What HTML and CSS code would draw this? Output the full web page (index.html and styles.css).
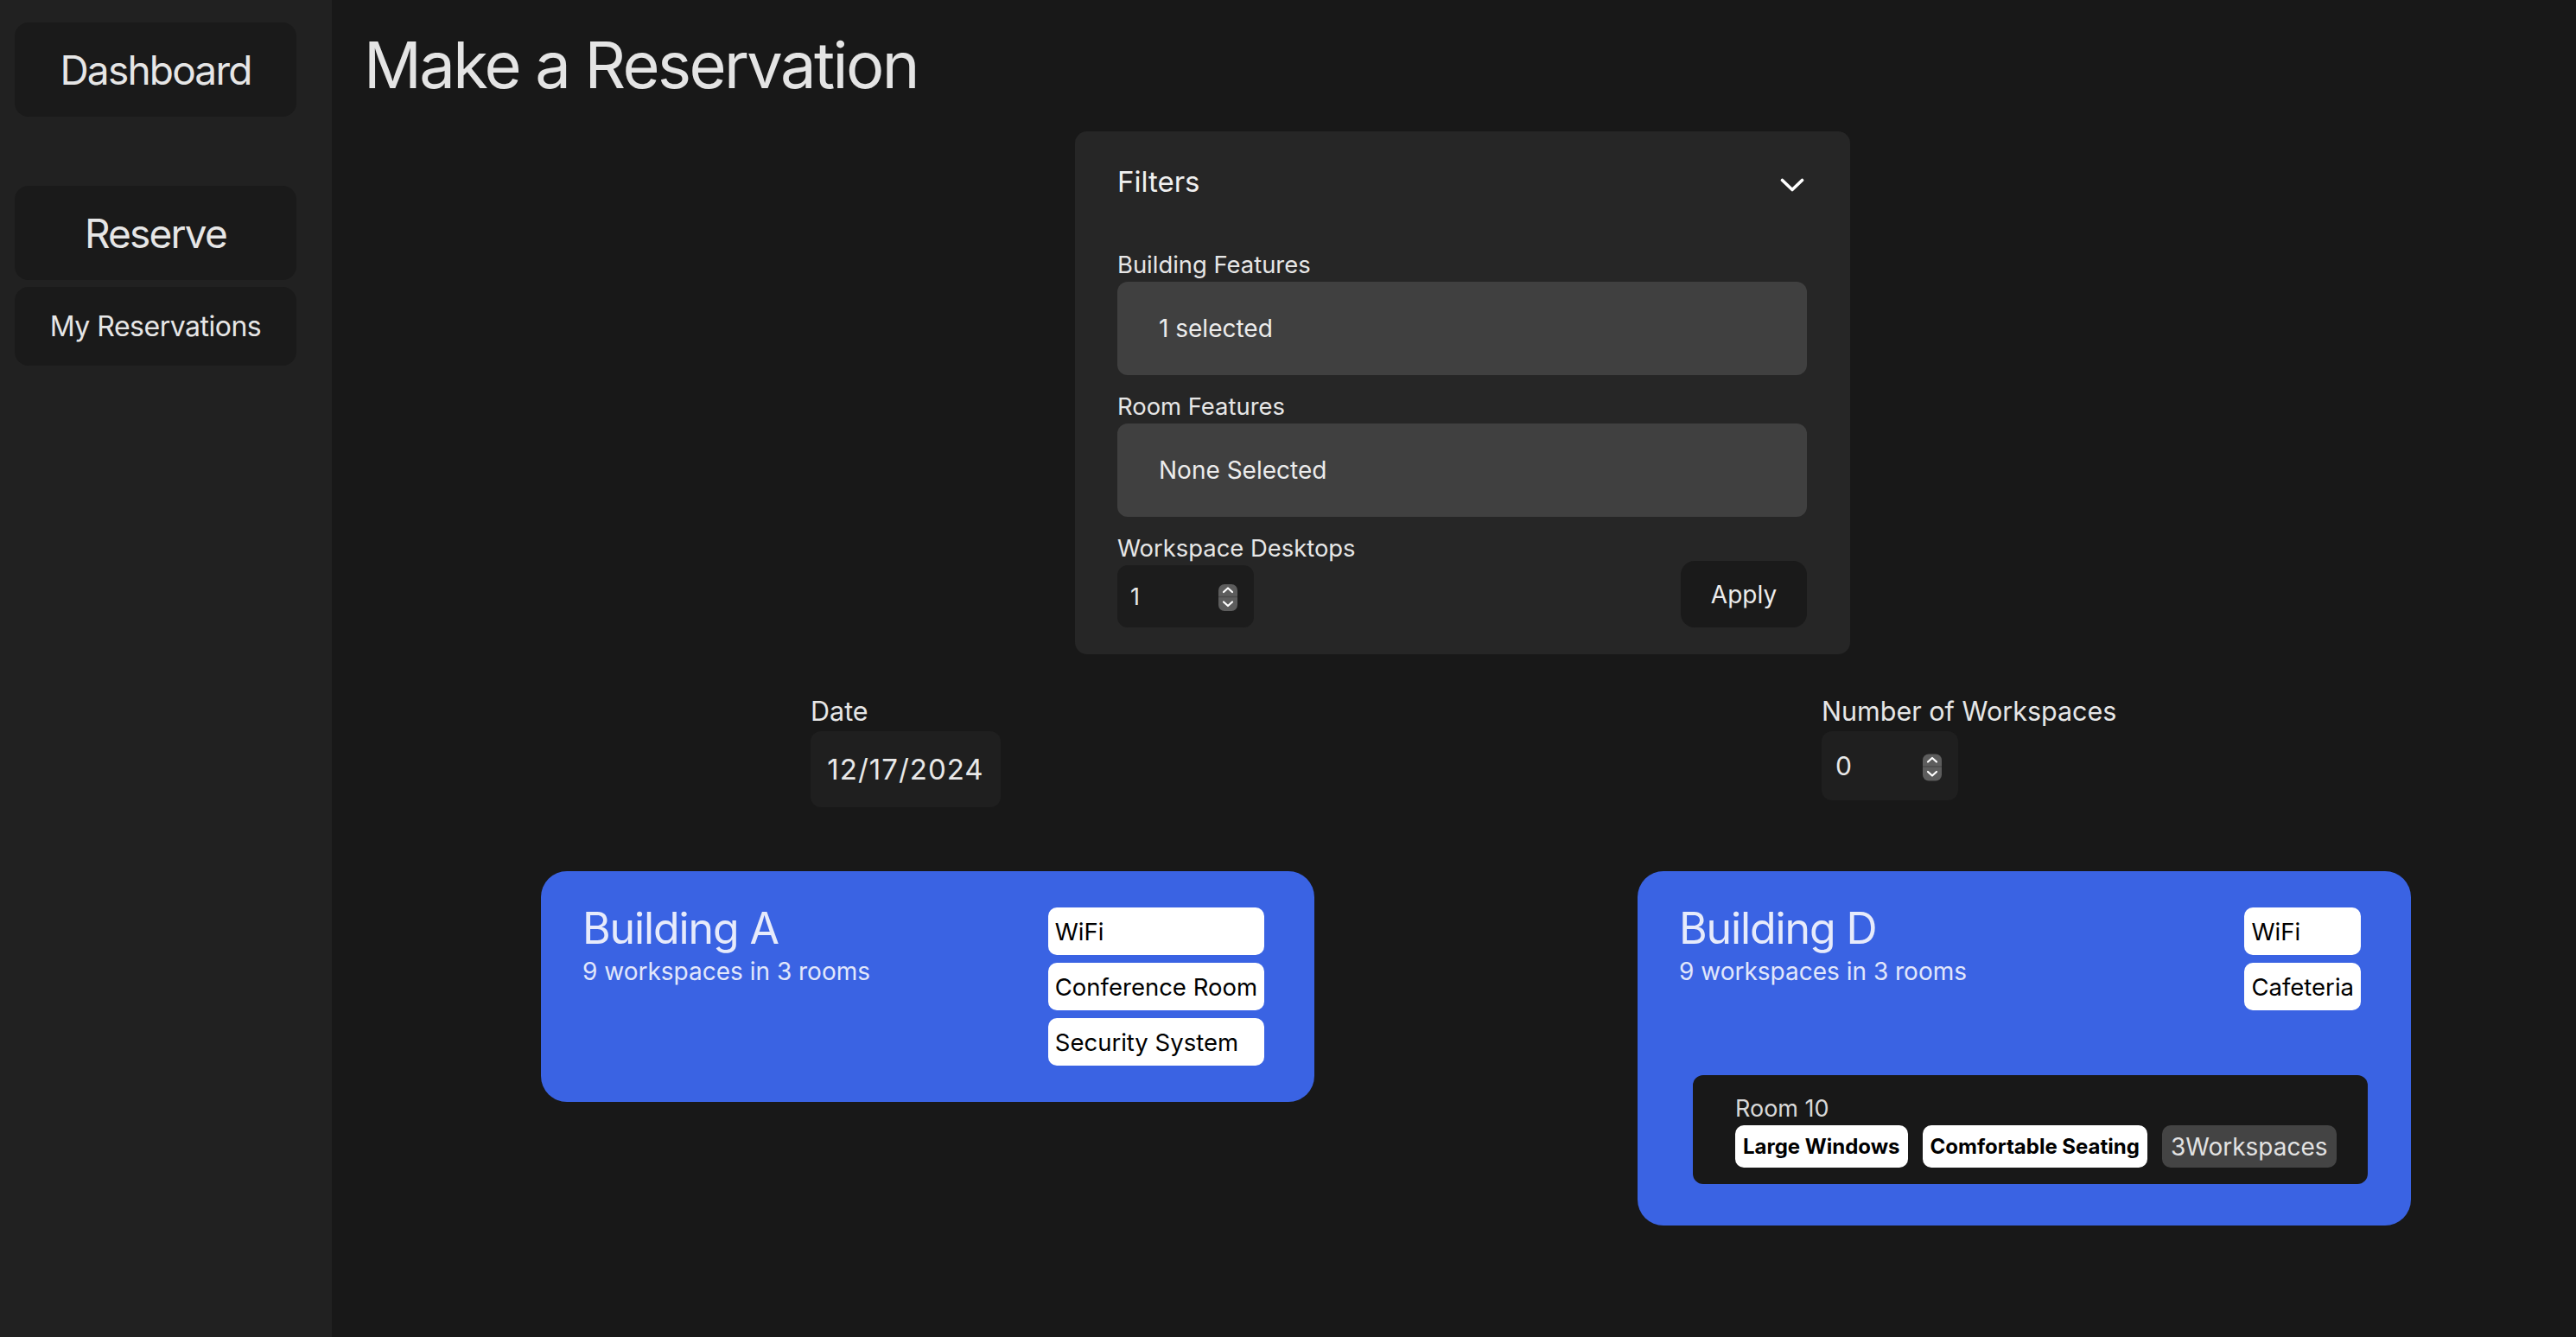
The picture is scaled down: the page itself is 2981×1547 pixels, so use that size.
FILE: index.html
```html
<!DOCTYPE html>
<html lang="en">
<head>
<meta charset="utf-8">
<title>Make a Reservation</title>
<link rel="stylesheet" href="styles.css">
</head>
<body>
<div class="app">
  <aside class="sidebar">
    <a class="nav-btn nav-lg" href="#">Dashboard</a>
    <div class="nav-group">
      <a class="nav-btn nav-lg" href="#">Reserve</a>
      <a class="nav-btn nav-sm" href="#">My Reservations</a>
    </div>
  </aside>
  <main class="main">
    <h1 class="page-title">Make a Reservation</h1>

    <section class="filters">
      <div class="filters-head">
        <span>Filters</span>
        <svg class="chev" width="28" height="16" viewBox="0 0 28 16"><polyline points="2.5,2.5 14,13.5 25.5,2.5" fill="none" stroke="#fff" stroke-width="3.6" stroke-linecap="round" stroke-linejoin="round"/></svg>
      </div>
      <div class="filters-body">
        <div class="field">
          <span class="field-label">Building Features</span>
          <div class="select">1 selected</div>
        </div>
        <div class="field">
          <span class="field-label">Room Features</span>
          <div class="select">None Selected</div>
        </div>
        <div class="field-row">
          <div class="field">
            <span class="field-label">Workspace Desktops</span>
            <div class="num-input"><span>1</span>
              <svg class="spin" width="22" height="31" viewBox="0 0 22 31"><rect x="0" y="0" width="22" height="31" rx="7" fill="#5d5d5d"/><line x1="0" y1="14.5" x2="22" y2="14.5" stroke="#4b4b4b" stroke-width="1.5"/><polyline points="6,9 11,4.5 16,9" fill="none" stroke="#fff" stroke-width="2.2" stroke-linecap="round" stroke-linejoin="round"/><polyline points="6,20.5 11,25 16,20.5" fill="none" stroke="#fff" stroke-width="2.2" stroke-linecap="round" stroke-linejoin="round"/></svg>
            </div>
          </div>
          <button class="apply" type="button">Apply</button>
        </div>
      </div>
    </section>

    <div class="controls">
      <div class="ctl">
        <span class="ctl-label">Date</span>
        <div class="date-input">12/17/2024</div>
      </div>
      <div class="ctl">
        <span class="ctl-label">Number of Workspaces</span>
        <div class="count-input"><span>0</span>
          <svg class="spin" width="22" height="32" viewBox="0 0 22 31"><rect x="0" y="0" width="22" height="31" rx="7" fill="#5d5d5d"/><line x1="0" y1="14.5" x2="22" y2="14.5" stroke="#4b4b4b" stroke-width="1.5"/><polyline points="6,9 11,4.5 16,9" fill="none" stroke="#fff" stroke-width="2.2" stroke-linecap="round" stroke-linejoin="round"/><polyline points="6,20.5 11,25 16,20.5" fill="none" stroke="#fff" stroke-width="2.2" stroke-linecap="round" stroke-linejoin="round"/></svg>
        </div>
      </div>
    </div>

    <div class="cards">
      <article class="card">
        <div class="card-head">
          <div class="card-info">
            <h2 class="card-title">Building A</h2>
            <p class="card-sub">9 workspaces in 3 rooms</p>
          </div>
          <div class="tags">
            <span class="tag">WiFi</span>
            <span class="tag">Conference Room</span>
            <span class="tag">Security System</span>
          </div>
        </div>
      </article>

      <article class="card card-rooms">
        <div class="card-head">
          <div class="card-info">
            <h2 class="card-title">Building D</h2>
            <p class="card-sub">9 workspaces in 3 rooms</p>
          </div>
          <div class="tags">
            <span class="tag">WiFi</span>
            <span class="tag">Cafeteria</span>
          </div>
        </div>
        <div class="room">
          <div class="room-name">Room 10</div>
          <div class="room-tags">
            <span class="rtag">Large Windows</span>
            <span class="rtag">Comfortable Seating</span>
            <span class="rtag rtag-count">3Workspaces</span>
          </div>
        </div>
      </article>
    </div>
  </main>
</div>
</body>
</html>
```

FILE: styles.css
```css
* { box-sizing: border-box; }

html, body {
  margin: 0;
  height: 100%;
}

body {
  background: #181818;
  font-family: Inter, "Noto Sans", sans-serif;
  color: #e4e4e4;
}

.app {
  display: flex;
  min-height: 100vh;
}

/* Sidebar */
.sidebar {
  width: 384px;
  flex-shrink: 0;
  background: #212121;
  padding: 26px 41px 0 17px;
  display: flex;
  flex-direction: column;
}

.nav-btn {
  display: flex;
  align-items: center;
  justify-content: center;
  background: #1a1a1a;
  border-radius: 16px;
  color: #e6e6e6;
  text-decoration: none;
}

.nav-lg {
  height: 109px;
  font-size: 46px;
  letter-spacing: -1.8px;
}

.nav-sm {
  height: 91px;
  font-size: 32px;
  letter-spacing: -0.5px;
}

.nav-group {
  margin-top: 80px;
  display: flex;
  flex-direction: column;
  gap: 8px;
}

/* Main */
.main {
  flex: 1;
  padding-top: 30px;
}

.page-title {
  margin: 0 0 32px 37px;
  font-size: 74px;
  font-weight: 400;
  line-height: 90px;
  letter-spacing: -2.6px;
  color: #e4e4e4;
}

/* Filters panel */
.filters {
  margin-left: 860px;
  width: 897px;
  background: #262626;
  border-radius: 14px;
  padding: 38px 50px 31px 49px;
}

.filters-head {
  display: flex;
  justify-content: space-between;
  align-items: center;
  height: 40px;
  font-size: 33px;
  line-height: 40px;
  color: #f0f0f0;
}

.chev {
  margin-top: 8px;
  margin-right: 3px;
}

.filters-body {
  margin-top: 60px;
}

.field {
  display: flex;
  flex-direction: column;
}

.field + .field {
  margin-top: 20px;
}

.field-label {
  font-size: 27.4px;
  line-height: 33px;
  margin-bottom: 3px;
  color: #e6e6e6;
}

.select {
  height: 108px;
  background: #404040;
  border-radius: 12px;
  padding-left: 48px;
  display: flex;
  align-items: center;
  font-size: 28px;
  color: #ececec;
}

.field-row {
  display: flex;
  justify-content: space-between;
  align-items: flex-end;
  margin-top: 20px;
}

.num-input,
.count-input {
  display: flex;
  align-items: center;
  justify-content: space-between;
  color: #e8e8e8;
  border-radius: 12px;
}

.num-input {
  width: 158px;
  height: 72px;
  background: #1c1c1c;
  padding: 0 19px 0 15px;
  font-size: 27px;
}

.spin {
  display: block;
  margin-top: 3px;
}

.apply {
  width: 146px;
  height: 77px;
  border: 0;
  background: #1a1a1a;
  border-radius: 16px;
  font-family: inherit;
  font-size: 28px;
  color: #ececec;
  display: flex;
  align-items: center;
  justify-content: center;
  padding: 0;
}

/* Date & count */
.controls {
  display: grid;
  grid-template-columns: 1170px auto;
  margin: 48px 0 0 554px;
}

.ctl {
  display: flex;
  flex-direction: column;
  align-items: flex-start;
}

.ctl-label {
  font-size: 30.5px;
  line-height: 35px;
  margin-bottom: 6px;
  color: #e6e6e6;
}

.date-input {
  width: 220px;
  height: 88px;
  background: #1f1f1f;
  border-radius: 12px;
  font-size: 33px;
  letter-spacing: 1px;
  display: flex;
  align-items: center;
  justify-content: center;
  color: #e8e8e8;
}

.count-input {
  width: 158px;
  height: 80px;
  background: #1f1f1f;
  padding: 0 19px 0 16px;
  font-size: 30px;
}

/* Cards */
.cards {
  display: flex;
  align-items: flex-start;
  gap: 374px;
  margin: 74px 0 0 242px;
}

.card {
  width: 895px;
  background: #3a63e3;
  border-radius: 30px;
  padding: 42px 50px 42px 48px;
}

.card-rooms {
  padding-bottom: 48px;
}

.card-head {
  display: flex;
  justify-content: space-between;
  align-items: flex-start;
  padding-right: 8px;
}

.card-title {
  margin: 0;
  font-size: 50px;
  font-weight: 400;
  line-height: 48px;
  letter-spacing: -1.1px;
  color: #e7ebfb;
}

.card-sub {
  margin: 9px 0 0;
  font-size: 28px;
  line-height: 34px;
  color: #e1e7fb;
}

.tags {
  display: flex;
  flex-direction: column;
  gap: 9px;
}

.tag {
  height: 55px;
  padding: 0 8px;
  background: #ffffff;
  color: #000000;
  border-radius: 10px;
  font-size: 27.5px;
  display: flex;
  align-items: center;
}

.room {
  margin: 75px 0 0 16px;
  background: #181818;
  border-radius: 12px;
  padding: 22px 20px 19px 49px;
}

.room-name {
  font-size: 27px;
  line-height: 33px;
  color: #d8d8d8;
}

.room-tags {
  display: flex;
  gap: 17px;
  margin-top: 3px;
}

.rtag {
  height: 49px;
  padding: 0 9px;
  border-radius: 10px;
  background: #ffffff;
  color: #000000;
  font-weight: 700;
  font-size: 24px;
  display: flex;
  align-items: center;
}

.rtag-count {
  background: #444444;
  color: #e2e2e2;
  font-weight: 400;
  font-size: 28px;
  padding: 0 10px;
}
```
